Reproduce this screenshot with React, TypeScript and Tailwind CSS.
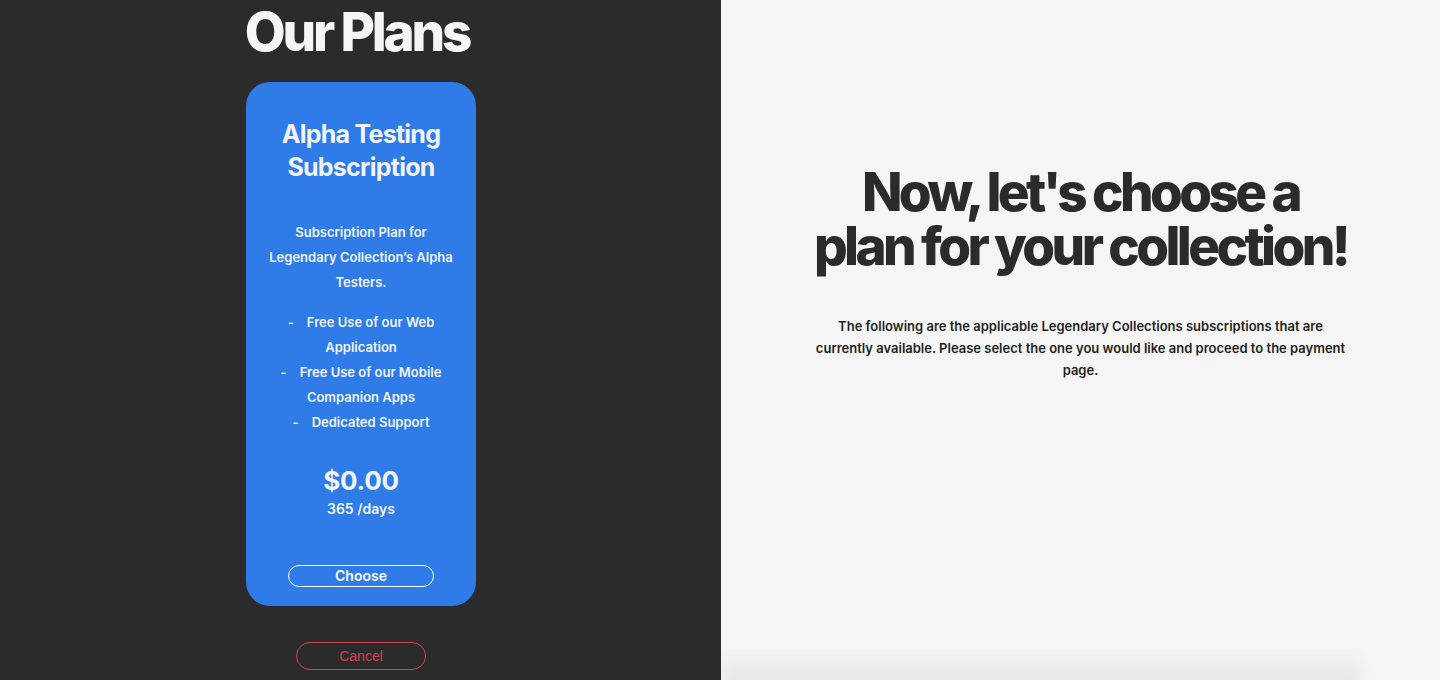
export default function App() {
  const features = [
    ["Free Use of our Web", "Application"],
    ["Free Use of our Mobile", "Companion Apps"],
    ["Dedicated Support"],
  ];

  return (
    <div className="flex h-[680px] w-[1440px] overflow-hidden font-['Inter',sans-serif]">
      {/* left: plans */}
      <div className="flex w-[721px] shrink-0 flex-col items-center bg-[#2b2b2b]">
        <h1 className="mt-[2px] mr-[7px] text-[53px] font-extrabold leading-[60px] tracking-[-0.06em] text-[#f5f5f5]">
          Our Plans
        </h1>

        <div className="mt-[20px] ml-[1px] flex w-[230px] flex-col items-center rounded-[24px] bg-[#2f7be8] px-[20px] pt-[36px] pb-[19px] text-center text-[#f1f5fb]">
          <h2 className="text-[25px] font-bold leading-[33px] tracking-[-0.03em]">
            Alpha Testing
            <br />
            Subscription
          </h2>

          <p className="mt-[36px] text-[13px] font-semibold leading-[25px]">
            Subscription Plan for
            <br />
            Legendary Collection’s Alpha
            <br />
            Testers.
          </p>

          <ul className="mt-[15px] text-[13px] font-semibold leading-[25px]">
            {features.map((f) => (
              <li key={f[0]}>
                <div>-&nbsp;&nbsp;&nbsp;&nbsp;{f[0]}</div>
                {f[1] && <div>{f[1]}</div>}
              </li>
            ))}
          </ul>

          <div className="mt-[30px] text-[26px] font-bold leading-[32px] tracking-[-0.01em]">$0.00</div>
          <div className="mt-[2px] text-[14px] font-semibold leading-[20px]">365 /days</div>

          <button className="mt-[46px] h-[22px] w-[146px] rounded-full border border-white text-[14px] font-semibold leading-[20px] text-white">
            Choose
          </button>
        </div>

        <button className="mt-[36px] ml-[1px] h-[28px] w-[130px] rounded-full border border-[#cf4650] font-['Liberation_Sans',sans-serif] text-[14px] text-[#d0454e]">
          Cancel
        </button>
      </div>

      {/* right: intro text */}
      <div className="flex min-w-0 flex-1 flex-col items-center overflow-hidden bg-[#f5f5f5] text-[#2b2b2b]">
        <h2 className="mt-[165px] text-center text-[53px] font-extrabold leading-[54px] tracking-[-0.068em]">
          Now, let's choose a
          <br />
          plan for your collection!
        </h2>
        <p className="mt-[42px] w-[540px] text-center text-[13px] font-semibold leading-[22px] text-[#1f1f1f]">
          The following are the applicable Legendary Collections subscriptions that are currently available. Please select the one you would like and proceed to the payment page.
        </p>
        <div className="mt-auto mr-[80px] h-[36px] w-[640px] shrink-0 translate-y-[6px] bg-gradient-to-b from-transparent to-[#e4e4e4] blur-[6px]" />
      </div>
    </div>
  );
}
